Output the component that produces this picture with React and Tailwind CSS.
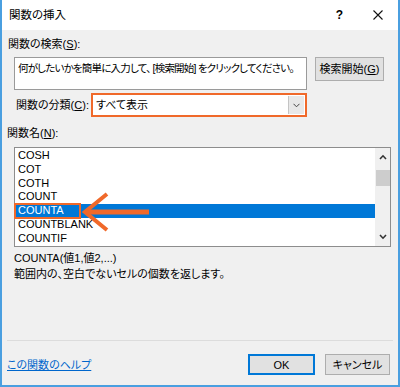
import { useState } from 'react';

const items = ['COSH', 'COT', 'COTH', 'COUNT', 'COUNTA', 'COUNTBLANK', 'COUNTIF'];

const App = () => {
    const [selected] = useState('COUNTA');

    return (
        <div className="w-[400px] h-[387px] flex flex-col border-x-2 border-b-2 border-[#4a9fe0] overflow-hidden text-black text-[11px] leading-[14px] font-['Liberation_Sans','Noto_Sans_CJK_JP',sans-serif] [font-feature-settings:'palt']">
            {/* Title bar */}
            <div className="h-[30px] bg-white flex items-center pl-[7px] shrink-0">
                <span className="text-[11.5px]">関数の挿入</span>
                <span className="ml-auto mr-[30px] text-[12px] font-bold">?</span>
                <svg width="10" height="10" viewBox="0 0 10 10" className="mr-[15px]">
                    <path d="M0.5 0.5 L9.5 9.5 M9.5 0.5 L0.5 9.5" stroke="#111" strokeWidth="1.1" />
                </svg>
            </div>

            {/* Body */}
            <div className="flex-1 bg-[#f0f0f0] flex flex-col">
                <div className="mt-[7px] ml-[6px]">関数の検索(<span className="underline">S</span>):</div>

                <div className="mt-[6px] flex items-start">
                    <div className="ml-[12px] w-[293px] h-[33px] bg-white border border-[#9a9a9a] pl-[3px] pt-[3px] whitespace-nowrap overflow-hidden text-[10.5px] tracking-[-0.8px]">
                        何がしたいかを簡単に入力して、 [検索開始] をクリックしてください。
                    </div>
                    <button className="ml-[8px] w-[69px] h-[24px] bg-[#e1e1e1] border border-[#adadad] flex items-center justify-center">
                        検索開始(<span className="underline">G</span>)
                    </button>
                </div>

                <div className="mt-[3px] flex items-center">
                    <div className="ml-[14px] w-[75px]">関数の分類(<span className="underline">C</span>):</div>
                    <div className="w-[216px] h-[24px] border-2 border-[#f0692a] bg-white flex items-center">
                        <span className="pl-[3px] flex-1">すべて表示</span>
                        <div className="w-[16px] h-[18px] mr-[1px] bg-[#e8e8e8] border-l border-[#c4c4c4] flex items-center justify-center">
                            <svg width="7" height="5" viewBox="0 0 7 5">
                                <path d="M0.5 0.8 L3.5 3.8 L6.5 0.8" fill="none" stroke="#444" strokeWidth="1" />
                            </svg>
                        </div>
                    </div>
                </div>

                <div className="mt-[9px] ml-[5px]">関数名(<span className="underline">N</span>):</div>

                {/* Function list */}
                <div className="mt-[7px] ml-[12px] w-[377px] h-[100px] border border-[#8d8d8d] bg-white flex relative">
                    <div className="flex-1 pt-[1px] pl-[1px]">
                        {items.map((name) => (
                            <div
                                key={name}
                                className={`h-[13.75px] leading-[13.75px] pl-[2px] ${name === selected ? 'bg-[#0078d7] text-white' : ''}`}
                            >
                                {name}
                            </div>
                        ))}
                    </div>
                    <div className="w-[15px] bg-[#f0f0f0] flex flex-col items-center">
                        <svg width="8" height="6" viewBox="0 0 8 6" className="mt-[6px]">
                            <path d="M1 5 L4 1.8 L7 5" fill="none" stroke="#333" strokeWidth="1.6" />
                        </svg>
                        <div className="mt-[10px] w-[14px] h-[16px] bg-[#cdcdcd]" />
                        <svg width="8" height="6" viewBox="0 0 8 6" className="mt-auto mb-[6px]">
                            <path d="M1 1 L4 4.2 L7 1" fill="none" stroke="#333" strokeWidth="1.6" />
                        </svg>
                    </div>

                    {/* Highlight box and arrow */}
                    <div className="absolute left-[-1px] top-[55px] w-[67px] h-[16px] border-2 border-[#f0692a]" />
                    <svg width="70" height="40" viewBox="0 0 70 40" className="absolute left-[67px] top-[44px]">
                        <path d="M25 2 L3 20 L25 38" fill="none" stroke="#f0692a" strokeWidth="4" />
                        <path d="M5 20 L67 20" stroke="#f0692a" strokeWidth="5" />
                    </svg>
                </div>

                <div className="mt-[4px] ml-[12px]">COUNTA(値1,値2,...)</div>
                <div className="mt-[2px] ml-[12px]">範囲内の、空白でないセルの個数を返します。</div>

                <div className="mt-[59px] ml-[5px] w-[386px] h-px bg-[#dcdcdc]" />

                <div className="mt-[13px] flex items-center">
                    <a className="ml-[5px] text-[#0066cc] underline">この関数のヘルプ</a>
                    <button className="ml-auto w-[67px] h-[21px] bg-[#e1e1e1] border-2 border-[#0078d7] flex items-center justify-center">
                        OK
                    </button>
                    <button className="ml-[10px] mr-[8px] w-[65px] h-[21px] bg-[#e1e1e1] border border-[#adadad] flex items-center justify-center">
                        キャンセル
                    </button>
                </div>
            </div>
        </div>
    );
};

export default App;
